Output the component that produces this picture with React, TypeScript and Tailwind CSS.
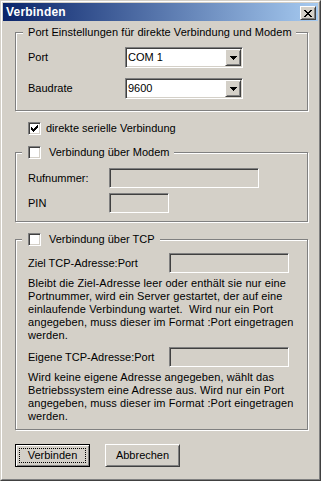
import React from "react";

const sunken =
  "border border-t-[#808080] border-l-[#808080] border-r-white border-b-white shadow-[inset_1px_1px_0_#404040,inset_-1px_-1px_0_#D4D0C8]";
const raised =
  "border border-t-white border-l-white border-r-[#404040] border-b-[#404040] shadow-[inset_1px_1px_0_#D4D0C8,inset_-1px_-1px_0_#808080]";
const group =
  "relative w-[293px] border border-[#808080] shadow-[1px_1px_0_#fff,inset_1px_1px_0_#fff]";

function Check({ checked }: { checked?: boolean }) {
  return (
    <div className={`w-[13px] h-[13px] bg-white shrink-0 ${sunken} flex items-center justify-center`}>
      {checked && (
        <svg width="9" height="9" viewBox="0 0 9 9" shapeRendering="crispEdges">
          <rect x="1" y="3" width="1" height="3" fill="#000" />
          <rect x="2" y="4" width="1" height="3" fill="#000" />
          <rect x="3" y="5" width="1" height="3" fill="#000" />
          <rect x="4" y="4" width="1" height="3" fill="#000" />
          <rect x="5" y="3" width="1" height="3" fill="#000" />
          <rect x="6" y="2" width="1" height="3" fill="#000" />
          <rect x="7" y="1" width="1" height="3" fill="#000" />
        </svg>
      )}
    </div>
  );
}

function Arrow() {
  return (
    <svg width="7" height="4" viewBox="0 0 7 4" shapeRendering="crispEdges">
      <rect x="0" y="0" width="7" height="1" fill="#000" />
      <rect x="1" y="1" width="5" height="1" fill="#000" />
      <rect x="2" y="2" width="3" height="1" fill="#000" />
      <rect x="3" y="3" width="1" height="1" fill="#000" />
    </svg>
  );
}

function Combo({ value }: { value: string }) {
  return (
    <div className={`w-[118px] h-[21px] bg-white ${sunken} p-px flex items-stretch`}>
      <div className="flex-1 flex items-center pl-px leading-[13px]">{value}</div>
      <div className={`w-[16px] bg-[#D4D0C8] ${raised} flex items-center justify-center`}>
        <Arrow />
      </div>
    </div>
  );
}

function Input({ w }: { w: string }) {
  return <div className={`${w} h-[20px] bg-[#D4D0C8] ${sunken}`} />;
}

export default function App() {
  return (
    <div className="w-[321px] h-[481px] bg-[#D4D0C8] border border-t-[#D4D0C8] border-l-[#D4D0C8] border-r-[#404040] border-b-[#404040] font-['Liberation_Sans',Arial,sans-serif] text-[11px] leading-[13px] text-black">
      <div className="h-full border border-t-white border-l-white border-r-[#808080] border-b-[#808080] p-px flex flex-col">
        {/* title bar */}
        <div className="h-[18px] flex items-start justify-between pl-[3px] pr-[2px] bg-[linear-gradient(to_right,#0A246A,#A6CAF0)]">
          <div className="text-white font-bold text-[12px] leading-[18px] tracking-[0.2px]">Verbinden</div>
          <div className={`mt-[3px] w-[16px] h-[14px] bg-[#D4D0C8] ${raised} flex items-center justify-center`}>
            <svg width="8" height="7" viewBox="0 0 8 7" shapeRendering="crispEdges">
              <rect x="0" y="0" width="2" height="1" fill="#000" />
              <rect x="6" y="0" width="2" height="1" fill="#000" />
              <rect x="1" y="1" width="2" height="1" fill="#000" />
              <rect x="5" y="1" width="2" height="1" fill="#000" />
              <rect x="2" y="2" width="4" height="1" fill="#000" />
              <rect x="3" y="3" width="2" height="1" fill="#000" />
              <rect x="2" y="4" width="4" height="1" fill="#000" />
              <rect x="1" y="5" width="2" height="1" fill="#000" />
              <rect x="5" y="5" width="2" height="1" fill="#000" />
              <rect x="0" y="6" width="2" height="1" fill="#000" />
              <rect x="6" y="6" width="2" height="1" fill="#000" />
            </svg>
          </div>
        </div>

        {/* content */}
        <div className="pl-[12px] flex flex-col">
          {/* group 1 */}
          <div className={`${group} mt-[11px] h-[79px] pt-[14px] px-[12px] flex flex-col gap-[10px]`}>
            <div className="absolute left-[7px] top-[-7px] h-[13px] bg-[#D4D0C8] pl-[5px] pr-[4px] flex items-center whitespace-nowrap tracking-[0.05px]">
              Port Einstellungen für direkte Verbindung und Modem
            </div>
            <div className="flex items-center h-[21px]">
              <div className="w-[97px]">Port</div>
              <Combo value="COM 1" />
            </div>
            <div className="flex items-center h-[21px]">
              <div className="w-[97px]">Baudrate</div>
              <Combo value="9600" />
            </div>
          </div>

          {/* direct checkbox */}
          <div className="mt-[11px] h-[13px] pl-[13px] flex items-center">
            <Check checked />
            <span className="ml-[5px]">direkte serielle Verbindung</span>
          </div>

          {/* group 2 */}
          <div className={`${group} mt-[17px] h-[70px] pt-[15px] px-[12px] flex flex-col gap-[5px]`}>
            <div className="absolute left-[6px] top-[-7px] h-[13px] bg-[#D4D0C8] pl-[6px] pr-[5px] flex items-center whitespace-nowrap">
              <Check />
              <span className="ml-[8px]">Verbindung über Modem</span>
            </div>
            <div className="flex items-center h-[20px]">
              <div className="w-[81px]">Rufnummer:</div>
              <Input w="w-[150px]" />
            </div>
            <div className="flex items-center h-[20px]">
              <div className="w-[81px]">PIN</div>
              <Input w="w-[60px]" />
            </div>
          </div>

          {/* group 3 */}
          <div className={`${group} mt-[17px] h-[191px] pt-[13px] px-[12px] flex flex-col`}>
            <div className="absolute left-[6px] top-[-7px] h-[13px] bg-[#D4D0C8] pl-[6px] pr-[5px] flex items-center whitespace-nowrap">
              <Check />
              <span className="ml-[8px]">Verbindung über TCP</span>
            </div>
            <div className="flex items-center h-[20px]">
              <div className="w-[141px]">Ziel TCP-Adresse:Port</div>
              <Input w="w-[120px]" />
            </div>
            <div className="mt-[4px] whitespace-nowrap tracking-[0.1px]">
              Bleibt die Ziel-Adresse leer oder enthält sie nur eine
              <br />
              Portnummer, wird ein Server gestartet, der auf eine
              <br />
              einlaufende Verbindung wartet.&nbsp; Wird nur ein Port
              <br />
              angegeben, muss dieser im Format :Port eingetragen
              <br />
              werden.
            </div>
            <div className="mt-[5px] flex items-center h-[20px]">
              <div className="w-[141px]">Eigene TCP-Adresse:Port</div>
              <Input w="w-[120px]" />
            </div>
            <div className="mt-[4px] whitespace-nowrap tracking-[0.1px]">
              Wird keine eigene Adresse angegeben, wählt das
              <br />
              Betriebssystem eine Adresse aus. Wird nur ein Port
              <br />
              angegeben, muss dieser im Format :Port eingetragen
              <br />
              werden.
            </div>
          </div>

          {/* buttons */}
          <div className="mt-[14px] flex gap-[15px]">
            <div className="relative w-[75px] h-[23px] border border-black shadow-[inset_1px_1px_0_#fff,inset_-1px_-1px_0_#808080] flex items-center justify-center">
              <div className="absolute inset-[3px] border border-dotted border-black" />
              Verbinden
            </div>
            <div className={`w-[75px] h-[23px] ${raised} flex items-center justify-center`}>
              Abbrechen
            </div>
          </div>
        </div>
      </div>
    </div>
  );
}
